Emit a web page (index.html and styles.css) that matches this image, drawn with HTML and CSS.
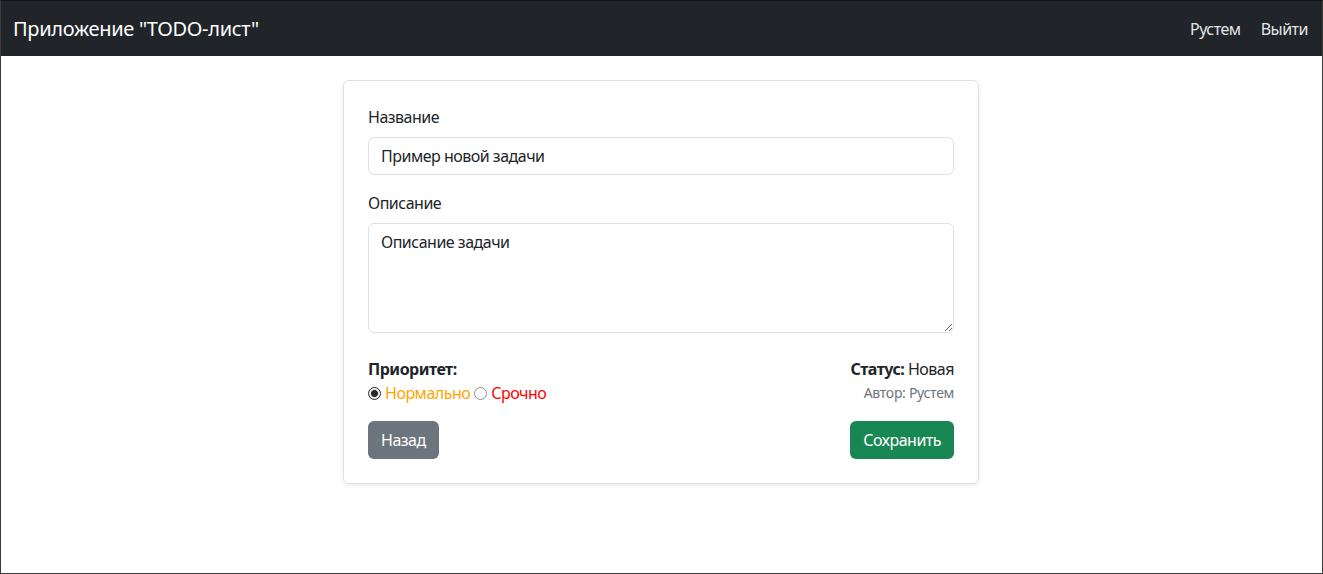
FILE: index.html
```html
<!DOCTYPE html>
<html lang="ru">
<head>
<meta charset="utf-8">
<title>TODO</title>
<link rel="stylesheet" href="styles.css">
</head>
<body>
<div class="frame">
  <nav class="navbar">
    <span class="brand">Приложение "TODO-лист"</span>
    <div class="nav-links">
      <a class="nav-link" href="#">Рустем</a>
      <a class="nav-link" href="#">Выйти</a>
    </div>
  </nav>
  <main class="main">
    <div class="card">
      <div class="field">
        <label class="label">Название</label>
        <input class="control" type="text" value="Пример новой задачи">
      </div>
      <div class="field field-lg">
        <label class="label">Описание</label>
        <textarea class="control textarea" rows="4">Описание задачи</textarea>
      </div>
      <div class="meta">
        <div class="meta-left">
          <div class="strong">Приоритет:</div>
          <div class="radios">
            <label class="radio"><input type="radio" name="p" checked><span class="orange">Нормально</span></label>
            <label class="radio"><input type="radio" name="p"><span class="red">Срочно</span></label>
          </div>
        </div>
        <div class="meta-right">
          <div><span class="strong">Статус:</span> Новая</div>
          <div class="author">Автор: Рустем</div>
        </div>
      </div>
      <div class="actions">
        <button class="btn btn-gray">Назад</button>
        <button class="btn btn-green">Сохранить</button>
      </div>
    </div>
  </main>
</div>
</body>
</html>
```
FILE: styles.css
```css
* { box-sizing: border-box; }
html, body { margin: 0; height: 100%; }
body {
  font-family: "Noto Sans", "Liberation Sans", sans-serif;
  font-size: 16px;
  line-height: 1.5;
  letter-spacing: -0.5px;
  color: #212529;
  background: #fff;
}
.frame {
  height: 100%;
  border: 1px solid #3c3c3c;
  border-top-color: #111;
}
.navbar {
  background: #212529;
  height: 55px;
  display: flex;
  align-items: center;
  justify-content: space-between;
  padding: 0 14px 0 12px;
}
.brand {
  color: #fff;
  font-size: 20px;
  line-height: 30px;
  letter-spacing: -0.3px;
}
.nav-links { display: flex; }
.nav-link {
  color: rgba(255,255,255,.9);
  text-decoration: none;
  padding: 8px 0 8px 20px;
}
.main {
  display: flex;
  justify-content: center;
  padding-top: 24px;
}
.card {
  width: 636px;
  border: 1px solid rgba(0,0,0,.12);
  border-radius: 6px;
  box-shadow: 0 .125rem .25rem rgba(0,0,0,.075);
  padding: 24px;
  margin-left: -1px;
}
.field { margin-bottom: 16px; display: flex; flex-direction: column; }
.field-lg { margin-bottom: 24px; }
.label { margin-bottom: 8px; }
.control {
  font: inherit;
  letter-spacing: inherit;
  color: #212529;
  border: 1px solid #dee2e6;
  border-radius: 6px;
  padding: 6px 12px;
  height: 38px;
  width: 100%;
  background: #fff;
}
.textarea { height: 110px; resize: vertical; }
.meta { display: flex; justify-content: space-between; margin-bottom: 16px; }
.strong { font-weight: 700; }
.radios { display: flex; gap: 4px; }
.radio { display: flex; align-items: center; }
.radio input {
  -webkit-appearance: none;
  appearance: none;
  margin: 1px 4px 0 0;
  width: 13px;
  height: 13px;
  border-radius: 50%;
  border: 1px solid #8f8f9d;
  background: #fff;
}
.radio input:checked {
  border: 1.5px solid #2b2b2b;
  background: radial-gradient(circle, #2b2b2b 0 3.2px, #e9e9ed 3.8px);
}
.orange { color: orange; }
.red { color: red; }
.meta-right { text-align: right; }
.author { font-size: 14px; color: #6c757d; line-height: 24px; letter-spacing: -0.3px; }
.actions { display: flex; justify-content: space-between; }
.btn {
  font: inherit;
  letter-spacing: inherit;
  color: #fff;
  border: 1px solid transparent;
  border-radius: 6px;
  padding: 6px 12px;
  height: 38px;
}
.btn-gray { background: #6c757d; }
.btn-green { background: #198754; }
```
